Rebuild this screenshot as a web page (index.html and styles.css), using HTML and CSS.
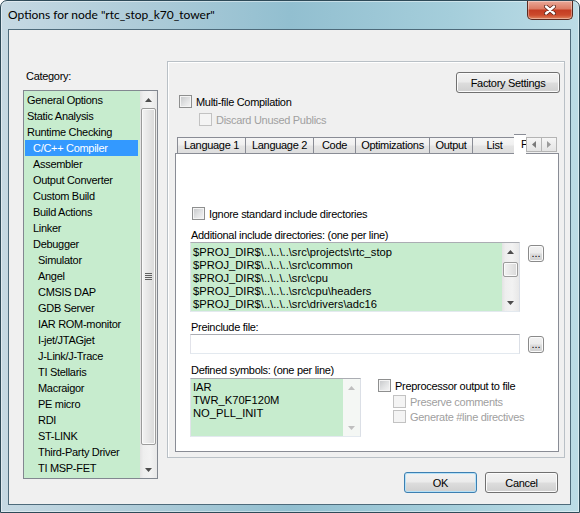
FILE: index.html
```html
<!DOCTYPE html>
<html>
<head>
<meta charset="utf-8">
<link rel="stylesheet" href="styles.css">
</head>
<body>
<div class="window">
  <div class="titlebar">
    <span class="title">Options for node &quot;rtc_stop_k70_tower&quot;</span>
    <div class="close">
      <svg width="12" height="10" viewBox="0 0 12 10"><path d="M2 1.5 L10 8.5 M10 1.5 L2 8.5" stroke="#5a2418" stroke-width="4" stroke-linecap="round"/><path d="M2 1.5 L10 8.5 M10 1.5 L2 8.5" stroke="#fff" stroke-width="2.4" stroke-linecap="round"/></svg>
    </div>
  </div>
  <div class="client">
    <div class="left">
      <div class="cat-label">Category:</div>
      <div class="listbox">
        <ul class="items">
          <li class="l1">General Options</li>
          <li class="l1">Static Analysis</li>
          <li class="l1">Runtime Checking</li>
          <li class="l2 sel">C/C++ Compiler</li>
          <li class="l2">Assembler</li>
          <li class="l2">Output Converter</li>
          <li class="l2">Custom Build</li>
          <li class="l2">Build Actions</li>
          <li class="l2">Linker</li>
          <li class="l2">Debugger</li>
          <li class="l3">Simulator</li>
          <li class="l3">Angel</li>
          <li class="l3">CMSIS DAP</li>
          <li class="l3">GDB Server</li>
          <li class="l3">IAR ROM-monitor</li>
          <li class="l3">I-jet/JTAGjet</li>
          <li class="l3">J-Link/J-Trace</li>
          <li class="l3">TI Stellaris</li>
          <li class="l3">Macraigor</li>
          <li class="l3">PE micro</li>
          <li class="l3">RDI</li>
          <li class="l3">ST-LINK</li>
          <li class="l3">Third-Party Driver</li>
          <li class="l3">TI MSP-FET</li>
        </ul>
        <div class="vscroll">
          <div class="sb-btn"><svg width="7" height="4"><path d="M0 4 L3.5 0 L7 4Z" fill="#4d4d4d"/></svg></div>
          <div class="sb-track">
            <div class="thumb thumb-list">
              <svg width="7" height="7"><path d="M0 0.5H7M0 2.5H7M0 4.5H7M0 6.5H7" stroke="#606060" stroke-width="1"/></svg>
            </div>
          </div>
          <div class="sb-btn"><svg width="7" height="4"><path d="M0 0 L3.5 4 L7 0Z" fill="#4d4d4d"/></svg></div>
        </div>
      </div>
    </div>
    <div class="right">
      <div class="panel">
        <div class="panel-top">
          <div class="checks">
            <div class="chkrow"><span class="cb"></span><span>Multi-file Compilation</span></div>
            <div class="chkrow sub dis"><span class="cb"></span><span>Discard Unused Publics</span></div>
          </div>
          <button class="btn factory">Factory Settings</button>
        </div>
        <div class="tabstrip">
          <div class="tab w69">Language 1</div>
          <div class="tab w69">Language 2</div>
          <div class="tab w42">Code</div>
          <div class="tab w74">Optimizations</div>
          <div class="tab w43">Output</div>
          <div class="tab w43 tab-list">List</div>
          <div class="tab tab-sel">Preprocessor</div>
          <div class="tabarrows">
            <div class="tarr"><svg width="4" height="7"><path d="M4 0 L0 3.5 L4 7Z" fill="#7a7a7a"/></svg></div>
            <div class="tarr"><svg width="4" height="7"><path d="M0 0 L4 3.5 L0 7Z" fill="#9a9a9a"/></svg></div>
          </div>
        </div>
        <div class="pane">
          <div class="chkrow ignore"><span class="cb"></span><span>Ignore standard include directories</span></div>
          <div class="lbl lbl-add">Additional include directories: (one per line)</div>
          <div class="fieldrow">
            <div class="textbox green inc">
              <div class="lines">
                <div>$PROJ_DIR$\..\..\..\src\projects\rtc_stop</div>
                <div>$PROJ_DIR$\..\..\..\src\common</div>
                <div>$PROJ_DIR$\..\..\..\src\cpu</div>
                <div>$PROJ_DIR$\..\..\..\src\cpu\headers</div>
                <div>$PROJ_DIR$\..\..\..\src\drivers\adc16</div>
              </div>
              <div class="vscroll small">
                <div class="sb-btn"><svg width="7" height="4"><path d="M0 4 L3.5 0 L7 4Z" fill="#4d4d4d"/></svg></div>
                <div class="sb-track"><div class="thumb thumb-inc"></div></div>
                <div class="sb-btn"><svg width="7" height="4"><path d="M0 0 L3.5 4 L7 0Z" fill="#4d4d4d"/></svg></div>
              </div>
            </div>
            <button class="btn dots dots-inc">...</button>
          </div>
          <div class="lbl lbl-pre">Preinclude file:</div>
          <div class="fieldrow">
            <div class="textbox input"></div>
            <button class="btn dots dots-pre">...</button>
          </div>
          <div class="lbl lbl-def">Defined symbols: (one per line)</div>
          <div class="fieldrow defrow">
            <div class="textbox green def">
              <div class="lines def-lines">
                <div>IAR</div>
                <div>TWR_K70F120M</div>
                <div>NO_PLL_INIT</div>
              </div>
              <div class="vscroll small disabled">
                <div class="sb-btn"><svg width="7" height="4"><path d="M0 4 L3.5 0 L7 4Z" fill="#bfbfbf"/></svg></div>
                <div class="sb-track"></div>
                <div class="sb-btn"><svg width="7" height="4"><path d="M0 0 L3.5 4 L7 0Z" fill="#bfbfbf"/></svg></div>
              </div>
            </div>
            <div class="preproc">
              <div class="chkrow"><span class="cb"></span><span>Preprocessor output to file</span></div>
              <div class="chkrow sub2 dis"><span class="cb"></span><span>Preserve comments</span></div>
              <div class="chkrow sub3 dis"><span class="cb"></span><span>Generate #line directives</span></div>
            </div>
          </div>
        </div>
      </div>
      <div class="buttons">
        <button class="btn ok">OK</button>
        <button class="btn cancel">Cancel</button>
      </div>
    </div>
  </div>
</div>
</body>
</html>
```

FILE: styles.css
```css
* { box-sizing: border-box; }
html, body { margin: 0; padding: 0; }
body {
  width: 580px;
  height: 513px;
  overflow: hidden;
  background: #ffffff;
  font-family: "Liberation Sans", Arial, sans-serif;
  font-size: 11px;
  letter-spacing: -0.3px;
  color: #000;
}
.window {
  width: 580px;
  height: 513px;
  border: 1px solid #2e4a58;
  border-radius: 7px 7px 0 0;
  background: linear-gradient(90deg, #c6d9e3 0%, #adcbd8 25%, #92bfd0 50%, #a5cedb 78%, #bcdce6 100%);
  box-shadow: inset 0 0 0 1px rgba(255,255,255,0.45);
  display: flex;
  flex-direction: column;
}
.titlebar {
  height: 28px;
  display: flex;
  align-items: flex-start;
  padding-left: 7px;
}
.title {
  margin-top: 6px;
  line-height: 16px;
  font-family: Lato, "Liberation Sans", sans-serif;
  font-size: 12px;
  letter-spacing: 0;
  color: #000;
}
.close {
  margin-left: auto;
  margin-right: 6px;
  width: 46px;
  height: 19px;
  border: 1px solid #5a2a20;
  border-top: none;
  border-radius: 0 0 5px 5px;
  background: linear-gradient(#e9a898 0%, #dc7d66 42%, #c43d23 52%, #cc4a2c 78%, #e08660 100%);
  box-shadow: inset 0 0 0 1px rgba(255,255,255,0.35);
  display: flex;
  align-items: center;
  justify-content: center;
}
.client {
  margin-left: 7px;
  width: 563px;
  height: 476px;
  border: 1px solid #4e6b7b;
  background: #f0f0f0;
  display: flex;
}
.left {
  margin-left: 14px;
  width: 135px;
  display: flex;
  flex-direction: column;
}
.cat-label {
  margin-top: 40px;
  padding-left: 3px;
  height: 13px;
  line-height: 13px;
}
.listbox {
  margin-top: 7px;
  height: 389px;
  border: 1px solid #828790;
  background: #c7ecce;
  display: flex;
}
.items {
  flex: 1;
  margin: 0;
  padding: 1px 0 0;
  list-style: none;
  overflow: hidden;
}
.items li {
  height: 16px;
  line-height: 16px;
  margin: 0 2px 0 1px;
  white-space: nowrap;
}
.l1 { padding-left: 2px; }
.l2 { padding-left: 8px; }
.l3 { padding-left: 13px; }
.items li.sel { background: #3399ff; color: #fff; }

.vscroll {
  width: 17px;
  display: flex;
  flex-direction: column;
  background: linear-gradient(90deg, #e3e3e3 0%, #eeeeee 20%, #f2f2f2 60%, #e8e8e8 100%);
}
.sb-btn {
  height: 17px;
  flex: none;
  display: flex;
  align-items: center;
  justify-content: center;
}
.sb-track { flex: 1; display: flex; flex-direction: column; }
.thumb {
  margin: 0 1px;
  border: 1px solid #9b9b9b;
  border-radius: 2px;
  background: linear-gradient(90deg, #f3f3f3 0%, #e6e6e6 50%, #d9d9d9 100%);
  box-shadow: inset 0 0 0 1px #fafafa;
  display: flex;
  align-items: center;
  justify-content: center;
}
.thumb-list { height: 337px; }
.thumb-inc { height: 15px; margin-top: 2px; }
.vscroll.disabled { background: #f4f7f4; }

.right {
  margin-left: 9px;
  width: 398px;
  display: flex;
  flex-direction: column;
}
.panel {
  margin-top: 31px;
  height: 397px;
  border: 1px solid #b9c0c6;
  box-shadow: inset 1px 1px 0 #ffffff;
  display: flex;
  flex-direction: column;
}
.panel-top {
  height: 72px;
  display: flex;
}
.checks { padding: 33px 0 0 11px; }
.chkrow {
  display: flex;
  align-items: center;
  height: 13px;
  gap: 4px;
  white-space: nowrap;
}
.chkrow.sub { margin-top: 5px; margin-left: 20px; }
.dis { color: #a0a0a0; }
.cb {
  width: 13px;
  height: 13px;
  flex: none;
  border: 1px solid #8e8f8f;
  background: linear-gradient(135deg, #c4c6c8 0%, #e2e3e4 55%, #f6f6f6 100%);
  box-shadow: inset 0 0 0 1px #f4f4f4;
}
.dis .cb {
  border-color: #c2c2c2;
  background: #f4f4f4;
  box-shadow: none;
}

.btn {
  font: inherit;
  font-size: 11px;
  letter-spacing: -0.3px;
  color: #000;
  padding: 0;
  border: 1px solid #707070;
  border-radius: 3px;
  background: linear-gradient(#f2f2f2 0%, #ebebeb 48%, #dddddd 52%, #cfcfcf 100%);
  box-shadow: inset 0 0 0 1px #fbfbfb;
}
.factory {
  margin: 10px 4px 0 auto;
  width: 104px;
  height: 21px;
}

.tabstrip {
  height: 20px;
  display: flex;
  align-items: flex-end;
  padding-left: 9px;
  position: relative;
  z-index: 1;
}
.tab {
  height: 17px;
  border: 1px solid #898c95;
  background: linear-gradient(#f6f6f6 0%, #efefef 48%, #e4e4e4 52%, #dedede 100%);
  text-align: center;
  line-height: 15px;
  white-space: nowrap;
  flex: none;
}
.tab + .tab { border-left: none; }
.w69 { width: 69px; }
.w42 { width: 42px; }
.w74 { width: 74px; }
.w43 { width: 43px; }
.tab.w69 + .tab.w69 { width: 68px; }
.tab-list { border-right: none; }
.tab-sel {
  height: 20px;
  width: 12px;
  margin-left: -2px;
  border: 1px solid #898c95;
  border-bottom: none;
  border-right: none;
  background: #ffffff;
  overflow: hidden;
  text-align: left;
  padding-left: 7px;
  line-height: 19px;
}
.tabarrows {
  align-self: flex-start;
  margin-top: 3px;
  display: flex;
}
.tarr {
  width: 16px;
  height: 15px;
  border: 1px solid #b4b4b4;
  background: linear-gradient(#f6f6f6, #e4e4e4);
  display: flex;
  align-items: center;
  justify-content: center;
}
.tarr + .tarr { margin-left: -1px; }

.pane {
  margin-left: 7px;
  margin-top: -1px;
  width: 384px;
  height: 299px;
  border: 1px solid #898c95;
  background: #ffffff;
  padding-left: 14px;
  display: flex;
  flex-direction: column;
}
.ignore { margin-top: 53px; margin-left: 2px; }
.lbl { height: 13px; line-height: 13px; margin-left: 1px; white-space: nowrap; }
.lbl-add { margin-top: 9px; }
.lbl-pre { margin-top: 9px; }
.lbl-def { margin-top: 10px; }
.fieldrow { display: flex; align-items: flex-start; }
.textbox {
  border: 1px solid;
  border-color: #abadb3 #dbdfe6 #e3e9ef #e2e3ea;
  background: #ffffff;
}
.green { background: #c7ecce; display: flex; }
.inc { width: 330px; height: 70px; }
.input { width: 330px; height: 20px; }
.def { width: 171px; height: 59px; }
.lines {
  flex: 1;
  font-family: "Liberation Sans", Arial, sans-serif;
  font-size: 11.2px;
  letter-spacing: 0;
  line-height: 13px;
  padding: 3px 0 0 2px;
  white-space: nowrap;
  overflow: hidden;
}
.def-lines { padding-top: 2px; }
.dots {
  width: 16px;
  height: 17px;
  margin-left: 8px;
  font-size: 11px;
  letter-spacing: 0;
  line-height: 15px;
  border-color: #8a8a8a;
}
.dots-inc { margin-top: 3px; }
.dots-pre { margin-top: 2px; }
.defrow { margin-top: 1px; }
.preproc {
  margin-left: 17px;
  margin-top: 1px;
  display: flex;
  flex-direction: column;
}
.sub2 { margin-left: 15px; margin-top: 3px; }
.sub3 { margin-left: 15px; margin-top: 2px; }

.buttons {
  display: flex;
  justify-content: flex-end;
  gap: 8px;
  margin-top: 14px;
  padding-right: 7px;
}
.ok, .cancel { width: 73px; height: 21px; }
.ok {
  border-color: #3c7fb1;
  box-shadow: inset 0 0 0 1px #b6e1f7;
}
```
